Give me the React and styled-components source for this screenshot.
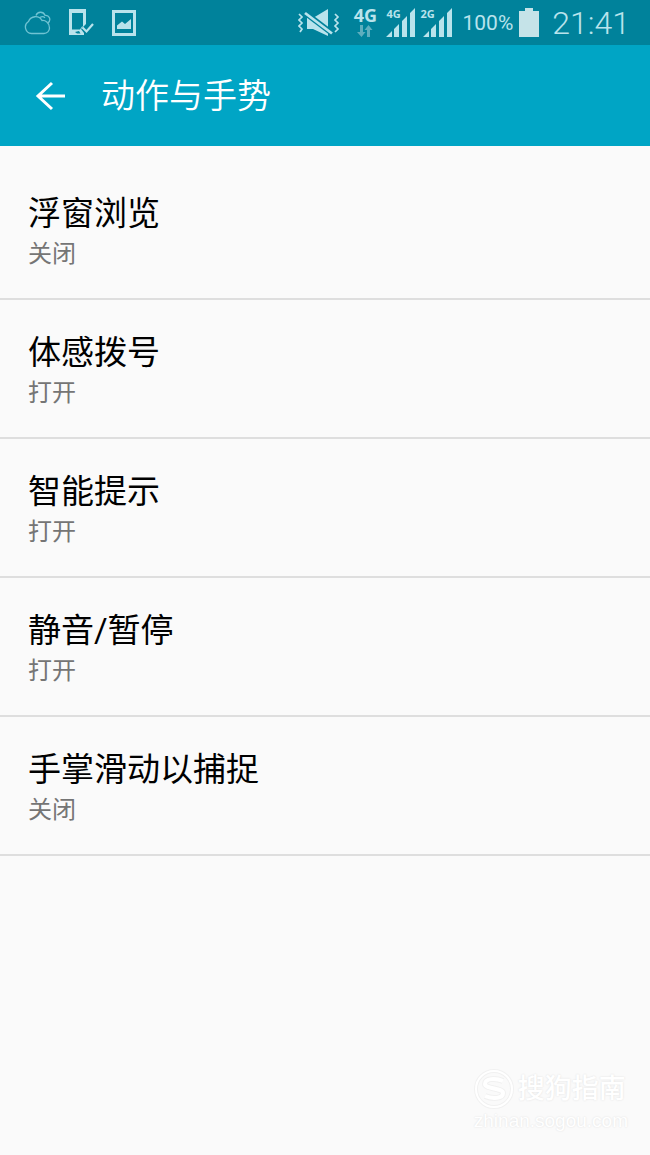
import React from 'react';
import styled, { createGlobalStyle } from 'styled-components';

const GlobalStyle = createGlobalStyle`
  body {
    margin: 0;
    background-color: #fafafa;
    font-family: Roboto, 'Noto Sans CJK SC', sans-serif;
  }
`;

const Page = styled.div`
  min-height: 100vh;
  position: relative;
`;

const StatusBar = styled.div`
  display: flex;
  justify-content: space-between;
  align-items: center;
  height: 45px;
  padding: 0 20px 0 24px;
  background-color: #00829b;
  color: #b9e3ec;
`;

const Notifications = styled.div`
  display: flex;
  align-items: center;
  gap: 18px;
`;

const Indicators = styled.div`
  display: flex;
  align-items: center;
`;

const Icon = styled.svg`
  display: block;
  flex: none;
  margin-right: ${(props) => props.$gap || 0}px;
`;

const Network = styled.div`
  display: flex;
  flex-direction: column;
  align-items: center;
  width: 26px;
  margin-right: 8px;
  padding-bottom: 3px;
  font: bold 18px/20px 'Open Sans', sans-serif;
`;

const Signal = styled.div`
  position: relative;
  margin-right: ${(props) => props.$gap}px;
`;

const SignalLabel = styled.span`
  position: absolute;
  top: 0;
  left: 0;
  font: bold 11px/11px 'Open Sans', sans-serif;
`;

const Battery = styled.span`
  margin-right: 6px;
  font-size: 21px;
  line-height: 28px;
`;

const Clock = styled.time`
  font-size: 32px;
  line-height: 44px;
  font-weight: 300;
`;

const Header = styled.header`
  display: flex;
  align-items: center;
  gap: 33px;
  padding: 25px 34px;
  background-color: #00a5c5;
  color: #fff;
`;

const BackButton = styled.button`
  padding: 0;
  border: none;
  background: none;
  color: inherit;
  cursor: pointer;
`;

const Title = styled.h1`
  margin: 0;
  padding-top: 2px;
  font-size: 34px;
  line-height: 49px;
  font-weight: 350;
`;

const List = styled.ul`
  margin: 0;
  padding: 15px 0 0;
  list-style: none;
`;

const Item = styled.li`
  border-bottom: 2px solid #dedede;
`;

const ItemButton = styled.button`
  display: block;
  width: 100%;
  padding: 30px 28px 27px;
  border: none;
  background: none;
  font-family: inherit;
  text-align: left;
  cursor: pointer;
`;

const ItemTitle = styled.span`
  display: block;
  font-size: 33px;
  line-height: 46px;
  color: #000;
`;

const ItemStatus = styled.span`
  display: block;
  font-size: 24px;
  line-height: 34px;
  color: #757575;
`;

const Watermark = styled.div`
  position: absolute;
  right: 22px;
  bottom: 22px;
  color: #fff;
  text-shadow: 0 0 2px #ddd;
`;

const WatermarkBrand = styled.div`
  display: flex;
  align-items: center;
  gap: 4px;
  font-size: 27px;
  line-height: 40px;
  font-weight: 500;
`;

const WatermarkUrl = styled.div`
  font: 19px/24px 'Liberation Sans', sans-serif;
`;

const settings = [
  { title: '浮窗浏览', status: '关闭' },
  { title: '体感拨号', status: '打开' },
  { title: '智能提示', status: '打开' },
  { title: '静音/暂停', status: '打开' },
  { title: '手掌滑动以捕捉', status: '关闭' },
];

const CloudIcon = () => (
  <Icon width="27" height="24" viewBox="0 0 27 24" fill="none" stroke="#6fc3d3" strokeWidth="1.3">
    <path d="M7.500 22.500A6.500 6.500 0 0 1 4.500 10.500A7.500 7.500 0 0 1 18 9.500C21 9 25.500 11.500 25.500 17a5.500 5.500 0 0 1-5.500 5.500z" />
    <path d="M12 4.500a4.800 4.800 0 0 1 9-.2c4.200-.3 6.600 4.500 3 7.700M16 6.500c1.500-1 3.500-1 5 .3" />
  </Icon>
);

const PhoneCheckIcon = () => (
  <Icon width="25" height="27" viewBox="0 0 25 27">
    <path
      d="M0 0h17v15l-3 3-2 2 3 4v2H0zM3 4v16.500h8l2-3H14V4zM6 23l2 1.500h3.500L10 22z"
      fill="currentColor"
      fillRule="evenodd"
    />
    <path d="M13.500 18.500l4 4 6.500-7.500" fill="none" stroke="currentColor" strokeWidth="2.200" />
  </Icon>
);

const PictureIcon = () => (
  <Icon width="24" height="26" viewBox="0 0 24 26">
    <path d="M0 0h24v26H0zM3 3v20h18V3z" fill="currentColor" fillRule="evenodd" />
    <path d="M5 19v-3.500l5-4 3 2.500 6-5v10z" fill="currentColor" />
  </Icon>
);

const MuteIcon = () => (
  <Icon $gap={12} width="42" height="27" viewBox="0 0 42 27">
    <path d="M9 9h6L30 0v27L15 20H9z" fill="currentColor" />
    <path d="M6 3l29 22" stroke="#00829b" strokeWidth="5.500" />
    <path d="M7 4l27 20.500" stroke="currentColor" strokeWidth="2.800" />
    <path
      d="M1 5l3 3-3 3 3 3-3 3 3 3-2 3M37 5l3 3-3 3 3 3-3 3 3 3-3 3"
      fill="none"
      stroke="currentColor"
      strokeWidth="1.700"
    />
  </Icon>
);

const DataIcon = () => (
  <Icon width="16" height="12" viewBox="0 0 16 12" fill="#5eaebe">
    <path d="M3 0h3v7h2.500L4.500 12 0 7h3zM10 12h3V5h2.500L11.500 0 7.500 5H10z" />
  </Icon>
);

const SignalBars = ({ label, inset, gap }) => (
  <Signal $gap={gap}>
    <SignalLabel>{label}</SignalLabel>
    <Icon width={29 + inset} height="29" viewBox={`${-inset} 0 ${29 + inset} 29`} fill="currentColor">
      <path d="M0 29l6-6v6zM8 21l5-5v13H8zM16 13l5-5v21h-5zM24 5l5-5v29h-5z" />
    </Icon>
  </Signal>
);

const BatteryIcon = () => (
  <Icon $gap={13} width="20" height="29" viewBox="0 0 20 29" fill="#c5e3e8">
    <path d="M6 0h8v3h6v26H0V3h6z" />
  </Icon>
);

const BackIcon = () => (
  <Icon width="34" height="30" viewBox="0 0 34 30" fill="none" stroke="currentColor" strokeWidth="3">
    <path d="M31 15H4M18 2L4 15l14 13" />
  </Icon>
);

const WatermarkLogo = () => (
  <Icon width="40" height="40" viewBox="0 0 40 40" fill="none">
    <circle cx="20" cy="20" r="18" stroke="#f1f1f1" strokeWidth="4" />
    <circle cx="20" cy="20" r="18" stroke="#fff" strokeWidth="2" />
    <path d="M29 12c-7-3-18-3-18 3 0 5 18 4 18 9 0 6-11 6-18 3" stroke="#f1f1f1" strokeWidth="6" />
    <path d="M29 12c-7-3-18-3-18 3 0 5 18 4 18 9 0 6-11 6-18 3" stroke="#fff" strokeWidth="4" />
  </Icon>
);

const App = () => {
  return (
    <Page lang="zh-CN">
      <GlobalStyle />
      <StatusBar>
        <Notifications>
          <CloudIcon />
          <PhoneCheckIcon />
          <PictureIcon />
        </Notifications>
        <Indicators>
          <MuteIcon />
          <Network>
            4G
            <DataIcon />
          </Network>
          <SignalBars label="4G" inset={0} gap={5} />
          <SignalBars label="2G" inset={3} gap={10} />
          <Battery>100%</Battery>
          <BatteryIcon />
          <Clock>21:41</Clock>
        </Indicators>
      </StatusBar>
      <Header>
        <BackButton aria-label="返回">
          <BackIcon />
        </BackButton>
        <Title>动作与手势</Title>
      </Header>
      <List>
        {settings.map((item) => (
          <Item key={item.title}>
            <ItemButton>
              <ItemTitle>{item.title}</ItemTitle>
              <ItemStatus>{item.status}</ItemStatus>
            </ItemButton>
          </Item>
        ))}
      </List>
      <Watermark>
        <WatermarkBrand>
          <WatermarkLogo />
          搜狗指南
        </WatermarkBrand>
        <WatermarkUrl>zhinan.sogou.com</WatermarkUrl>
      </Watermark>
    </Page>
  );
};

export default App;
